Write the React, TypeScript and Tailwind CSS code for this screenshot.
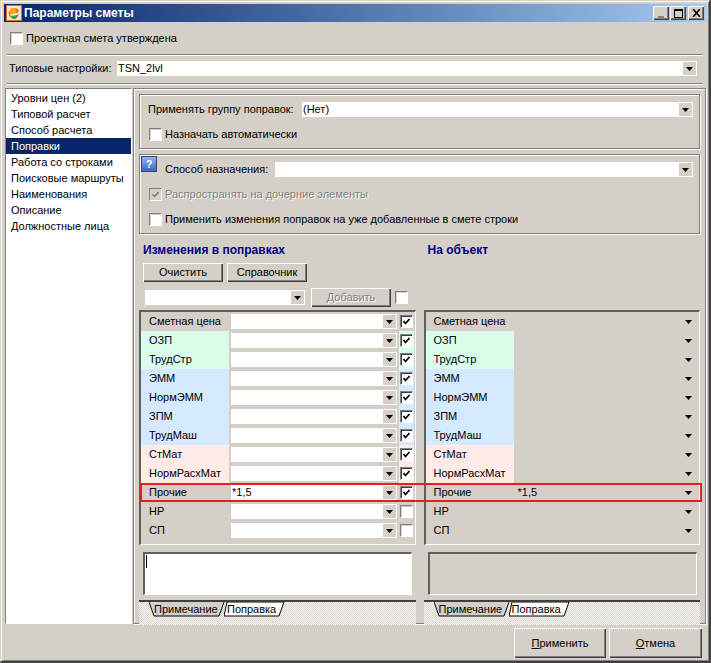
const raised = 'bg-[#d4d0c8] shadow-[inset_1px_1px_0_#fff,inset_-1px_-1px_0_#404040,inset_-2px_-2px_0_#808080]';
const groove = 'border border-[#808080] shadow-[inset_1px_1px_0_#fff,1px_1px_0_#fff]';

interface Row {
  label: string;
  tint: string;
  value?: string;
  checked: boolean;
}

const rows: Row[] = [
  { label: 'Сметная цена', tint: 'bg-[#d4d0c8]', checked: true },
  { label: 'ОЗП', tint: 'bg-[#d9ffeb]', checked: true },
  { label: 'ТрудСтр', tint: 'bg-[#d9ffeb]', checked: true },
  { label: 'ЭММ', tint: 'bg-[#d5e9ff]', checked: true },
  { label: 'НормЭММ', tint: 'bg-[#d5e9ff]', checked: true },
  { label: 'ЗПМ', tint: 'bg-[#d5e9ff]', checked: true },
  { label: 'ТрудМаш', tint: 'bg-[#d5e9ff]', checked: true },
  { label: 'СтМат', tint: 'bg-[#ffebe8]', checked: true },
  { label: 'НормРасхМат', tint: 'bg-[#ffebe8]', checked: true },
  { label: 'Прочие', tint: 'bg-[#d4d0c8]', value: '*1,5', checked: true },
  { label: 'НР', tint: 'bg-[#d4d0c8]', checked: false },
  { label: 'СП', tint: 'bg-[#d4d0c8]', checked: false },
];

const navItems = ['Уровни цен (2)', 'Типовой расчет', 'Способ расчета', 'Поправки', 'Работа со строками', 'Поисковые маршруты', 'Наименования', 'Описание', 'Должностные лица'];

function Arrow() {
  return (
    <svg width="7" height="4" viewBox="0 0 7 4" className="block shrink-0">
      <polygon points="0,0 7,0 3.5,4" fill="#000" />
    </svg>
  );
}

function Combo({ value, className }: { value?: string; className: string }) {
  return (
    <div className={`flex h-[15px] items-center bg-white pl-[1px] ${className}`}>
      <span className="flex-1 truncate leading-[15px]">{value}</span>
      <span className="mr-[1px] flex h-[13px] w-[13px] shrink-0 items-center justify-center bg-[#d4d0c8]">
        <Arrow />
      </span>
    </div>
  );
}

function Check({ checked, disabled }: { checked?: boolean; disabled?: boolean }) {
  return (
    <span className={`flex h-[13px] w-[13px] shrink-0 items-center justify-center border border-b-white border-l-[#808080] border-r-white border-t-[#808080] ${disabled ? 'bg-[#d4d0c8]' : 'bg-white'} ${checked && !disabled ? 'shadow-[inset_1px_1px_0_#404040]' : 'shadow-[inset_1px_1px_0_#d4d0c8]'}`}>
      {checked && (
        <svg width="9" height="9" viewBox="0 0 9 9">
          <polyline points="1.5,4 3.5,6.5 7.5,2" fill="none" stroke={disabled ? '#808080' : '#000'} strokeWidth="1.7" />
        </svg>
      )}
    </span>
  );
}

function Button({ children, className }: { children: React.ReactNode; className: string }) {
  return <div className={`flex items-center justify-center ${raised} ${className}`}>{children}</div>;
}

function AppIcon() {
  return (
    <svg width="16" height="16" viewBox="0 0 16 16" className="shrink-0">
      <rect x="0.5" y="0.5" width="15" height="15" fill="#fbe6c8" stroke="#d9701f" />
      <path d="M3 11a6 6 0 0 1 10-6l-1 3H6z" fill="#f07a12" />
      <circle cx="7" cy="6" r="3" fill="#f9a51e" />
      <path d="M3 10c3 1 6 1 10-1-1 3-3 5-5 5s-4-2-5-4z" fill="#45a843" />
      <path d="M7 12c2 0 4-1 5-2-1 2-2 4-4 4z" fill="#3a78c9" />
    </svg>
  );
}

function TitleButton({ children, className }: { children: React.ReactNode; className?: string }) {
  return <div className={`flex h-[14px] w-[16px] items-center justify-center ${raised} ${className ?? ''}`}>{children}</div>;
}

function Tabs() {
  return (
    <div className="mt-[5px] flex h-[25px] items-start border-t-2 border-[#404040] bg-[repeating-conic-gradient(#d4d0c8_0_25%,#fff_0_50%)] bg-size-[2px_2px] pl-[10px]">
      <div className="relative h-[15px] w-[75px] pl-[5px] leading-[14px]">
        <svg width="76" height="15" viewBox="0 0 76 15" className="absolute left-0 top-0">
          <polyline points="0,0 5,14 70,14 75,0" fill="#d4d0c8" stroke="#000" />
        </svg>
        <span className="relative">Примечание</span>
      </div>
      <div className="relative h-[15px] w-[62px] pl-[3px] leading-[14px]">
        <svg width="62" height="15" viewBox="0 0 62 15" className="absolute left-0 top-0">
          <polygon points="3,0 0,14 55,14 60,0" fill="#fff" stroke="#000" />
        </svg>
        <span className="relative">Поправка</span>
      </div>
    </div>
  );
}

function Column({ side }: { side: 'edit' | 'result' }) {
  const edit = side === 'edit';
  return (
    <div className="flex w-[277px] flex-col">
      <div className="h-[76px] pl-[4px]">
        <div className="pt-[8px] text-[12px] font-bold leading-[16px] text-[#000080]">{edit ? 'Изменения в поправках' : 'На объект'}</div>
        {edit && (
          <>
            <div className="mt-[5px] flex gap-[4px]">
              <Button className="h-[19px] w-[80px]">Очистить</Button>
              <Button className="h-[19px] w-[80px]">Справочник</Button>
            </div>
            <div className="mt-[6px] flex items-center pl-[2px]">
              <Combo className="w-[160px]" />
              <Button className="ml-[6px] h-[19px] w-[80px] text-[#808080] [text-shadow:1px_1px_0_#fff]">Добавить</Button>
              <span className="ml-[4px]"><Check /></span>
            </div>
          </>
        )}
      </div>

      <div className="h-[235px] border-b border-l-2 border-r border-t-2 border-b-white border-l-[#606060] border-r-white border-t-[#606060]">
        {rows.map((row) => (
          <div key={row.label} className="flex h-[19px] items-center">
            <div className={`flex h-full w-[88px] shrink-0 items-center pl-[8px] ${row.tint}`}>{row.label}</div>
            {edit ? (
              <>
                <Combo value={row.value} className="ml-[2px] w-[166px]" />
                <div className={`ml-[2px] flex h-full w-[15px] items-center justify-center ${row.tint}`}>
                  <Check checked={row.checked} />
                </div>
              </>
            ) : (
              <div className="flex flex-1 items-center pl-[4px] pr-[7px]">
                <span className="flex-1">{row.value}</span>
                <Arrow />
              </div>
            )}
          </div>
        ))}
      </div>

      <div className={`ml-[4px] mt-[7px] h-[43px] w-[269px] border-b border-l-2 border-r border-t-2 border-b-white border-l-[#606060] border-r-white border-t-[#606060] ${edit ? 'bg-white' : 'bg-[#d4d0c8]'}`}>
        {edit && <div className="ml-[1px] mt-[1px] h-[13px] w-[1px] bg-black" />}
      </div>
      <Tabs />
    </div>
  );
}

export default function App() {
  return (
    <div className="relative h-[663px] w-[711px] overflow-hidden bg-[#d4d0c8] font-['Liberation_Sans',sans-serif] text-[11px] leading-[13px] text-black">
      <div className="flex h-full flex-col border-b-2 border-l border-r-2 border-t border-b-[#404040] border-l-[#d4d0c8] border-r-[#404040] border-t-[#d4d0c8] p-[3px] shadow-[inset_1px_1px_0_#fff,inset_-1px_-1px_0_#808080]">
        {/* title bar */}
        <div className="flex h-[18px] items-center bg-gradient-to-r from-[#0a246a] to-[#a6caf0] pl-[2px] pr-[2px] text-white">
          <AppIcon />
          <span className="ml-[2px] flex-1 text-[12px] font-bold">Параметры сметы</span>
          <TitleButton>
            <span className="mt-[8px] h-[2px] w-[6px] bg-[#808080]" />
          </TitleButton>
          <TitleButton className="ml-[1px]">
            <span className="h-[9px] w-[9px] border border-t-2 border-black" />
          </TitleButton>
          <TitleButton className="ml-[2px]">
            <svg width="9" height="8" viewBox="0 0 9 8">
              <path d="M1 0l7 8M8 0L1 8" stroke="#000" strokeWidth="1.6" />
            </svg>
          </TitleButton>
        </div>

        <div className="flex h-[32px] items-start gap-[3px] pl-[6px] pt-[10px]">
          <Check />
          <span>Проектная смета утверждена</span>
        </div>
        <div className="mx-[3px] h-[2px] border-b border-t border-b-white border-t-[#808080]" />
        <div className="flex h-[27px] items-start pl-[5px] pt-[5px]">
          <span className="w-[108px] leading-[15px]">Типовые настройки:</span>
          <Combo value="TSN_2lvl" className="w-[580px]" />
        </div>
        <div className="mx-[3px] h-[2px] border-b border-t border-b-white border-t-[#808080]" />

        {/* main */}
        <div className="mt-[3px] flex h-[536px]">
          <div className="ml-[1px] h-full w-[127px] border border-b-white border-l-[#808080] border-r-white border-t-[#808080] bg-white pt-[1px]">
            {navItems.map((item) => (
              <div key={item} className={`flex h-[16px] items-center pl-[5px] ${item === 'Поправки' ? 'bg-[#0a246a] text-white' : ''}`}>
                {item}
              </div>
            ))}
          </div>
          <div className={`ml-[1px] h-full w-[573px] pl-[5px] pr-[5px] pt-[5px] ${groove}`}>
            <div className={`h-[55px] w-[561px] ${groove}`}>
              <div className="flex items-center pl-[8px] pt-[7px]">
                <span className="w-[154px]">Применять группу поправок:</span>
                <Combo value="(Нет)" className="w-[391px]" />
              </div>
              <div className="mt-[11px] flex items-center gap-[3px] pl-[9px]">
                <Check />
                <span>Назначать автоматически</span>
              </div>
            </div>
            <div className={`relative mt-[5px] h-[80px] w-[561px] ${groove}`}>
              <div className="absolute left-[1px] top-[1px] flex h-[16px] w-[16px] items-center justify-center border border-[#404060] bg-gradient-to-b from-[#8fb4f0] to-[#3c66c8] text-[11px] font-bold text-white">?</div>
              <div className="flex items-center pl-[25px] pt-[7px]">
                <span className="w-[110px]">Способ назначения:</span>
                <Combo className="w-[418px]" />
              </div>
              <div className="mt-[11px] flex items-center gap-[3px] pl-[9px] text-[#808080] [text-shadow:1px_1px_0_#fff]">
                <Check checked disabled />
                <span>Распространять на дочерние элементы</span>
              </div>
              <div className="mt-[12px] flex items-center gap-[3px] pl-[9px]">
                <Check />
                <span>Применить изменения поправок на уже добавленные в смете строки</span>
              </div>
            </div>
            <div className="flex gap-[8px]">
              <Column side="edit" />
              <Column side="result" />
            </div>
          </div>
        </div>

        {/* footer */}
        <div className="mt-[4px] flex justify-end gap-[3px] pr-[4px]">
          <Button className="h-[30px] w-[92px]"><span><u>П</u>рименить</span></Button>
          <Button className="h-[30px] w-[93px]"><span><u>О</u>тмена</span></Button>
        </div>
      </div>

      {/* highlight around the row being discussed */}
      <div className="absolute left-[140px] top-[483px] h-[19px] w-[562px] border-2 border-[#ed1c24]" />
    </div>
  );
}
